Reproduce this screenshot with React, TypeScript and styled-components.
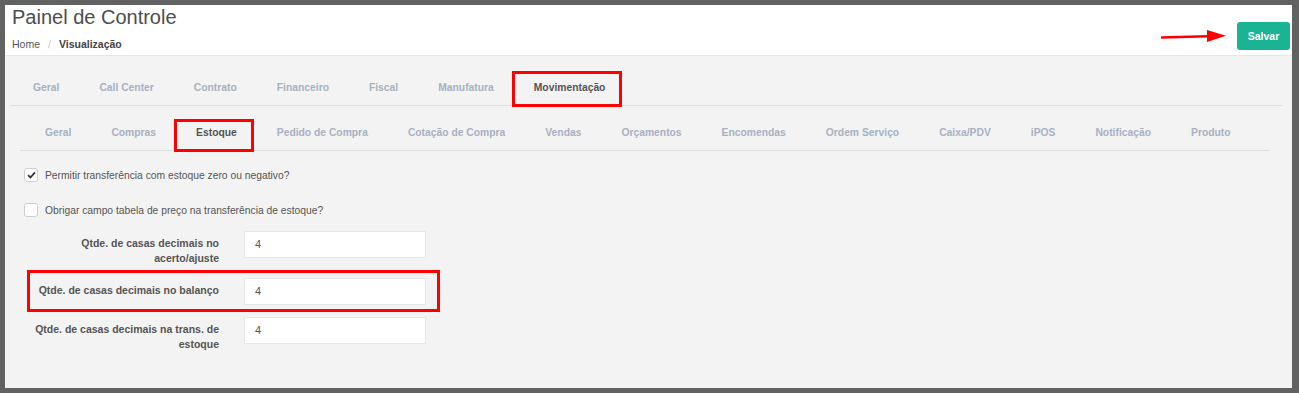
import React from 'react'
import styled, { createGlobalStyle } from 'styled-components'

const Global = createGlobalStyle`
  html, body {
    margin: 0;
    padding: 0;
    background: #626262;
  }
  body {
    font-family: "Liberation Sans", Arial, sans-serif;
  }
`

const Frame = styled.div`
  margin: 5px 7px 0 5px;
  width: 1287px;
  height: 383px;
  background: #f3f3f3;
  display: flex;
  flex-direction: column;
  overflow: hidden;
`

const Header = styled.div`
  height: 50px;
  background: #fff;
  border-bottom: 1px solid #e7e7e7;
  display: flex;
  justify-content: space-between;
  padding: 0 2px 0 7px;
`

const TitleBlock = styled.div`
  display: flex;
  flex-direction: column;
`

const Title = styled.h2`
  margin: 1px 0 0;
  font-size: 20px;
  line-height: 22px;
  font-weight: normal;
  color: #4d4d4d;
`

const Crumbs = styled.div`
  margin-top: 9px;
  font-size: 10.5px;
  line-height: 14px;
  color: #555;
  display: flex;
  gap: 8px;
`

const CrumbSep = styled.span`
  color: #c4c4c4;
`

const CrumbActive = styled.span`
  font-weight: bold;
  color: #444;
`

const Actions = styled.div`
  display: flex;
  align-items: center;
  gap: 10px;
  margin-top: 17px;
  height: 28px;
`

const SaveButton = styled.button`
  width: 53px;
  height: 28px;
  border: none;
  border-radius: 3px;
  background: #1ab394;
  color: #fff;
  font-family: "Liberation Sans", Arial, sans-serif;
  font-size: 10.5px;
  font-weight: bold;
  padding: 0;
`

const Content = styled.div`
  padding: 0 10px 0 5px;
`

const TabBar = styled.ul<{ $top: number; $pad: number }>`
  list-style: none;
  margin: ${p => p.$top}px 0 0;
  padding: 0 0 0 ${p => p.$pad}px;
  display: flex;
  border-bottom: 1px solid #dcdcdc;
`

const Tab = styled.li<{ $active?: boolean; $markTop?: number }>`
  position: relative;
  height: 35px;
  line-height: 36px;
  padding: 0 20px;
  font-size: 10.32px;
  font-weight: bold;
  white-space: nowrap;
  color: ${p => (p.$active ? '#555' : '#a7b1c2')};

  &::after {
    content: '';
    display: ${p => (p.$markTop !== undefined ? 'block' : 'none')};
    position: absolute;
    top: ${p => p.$markTop ?? 0}px;
    bottom: -2px;
    left: -2px;
    right: 3px;
    border: 3px solid #ff0000;
  }
`

const Panel = styled.div`
  padding: 0 13px 0 10px;
`

const CheckRow = styled.label<{ $top: number }>`
  display: flex;
  align-items: center;
  gap: 7px;
  margin: ${p => p.$top}px 0 0 4px;
  height: 14px;
  font-size: 10.3px;
  color: #555;
`

const Box = styled.span`
  width: 12px;
  height: 12px;
  border: 1px solid #cfcfcf;
  border-radius: 3px;
  background: #fff;
  display: flex;
  align-items: center;
  justify-content: center;
`

const Form = styled.div`
  margin: 14px 0 0 9px;
  display: flex;
  flex-direction: column;
  gap: 12px;
`

const Row = styled.div<{ $marked?: boolean }>`
  position: relative;
  display: flex;
  align-items: flex-start;
  width: 397px;

  &::after {
    content: '';
    display: ${p => (p.$marked ? 'block' : 'none')};
    position: absolute;
    top: -8px;
    bottom: -7px;
    left: -2px;
    right: -14px;
    border: 3px solid #ff0000;
  }
`

const Label = styled.div`
  width: 190px;
  padding: 5px 25px 0 0;
  text-align: right;
  font-size: 10.5px;
  line-height: 15px;
  font-weight: bold;
  color: #555;
`

const Field = styled.div`
  width: 170px;
  height: 25px;
  line-height: 25px;
  padding: 0 0 0 10px;
  border: 1px solid #e5e6e7;
  background: #fff;
  font-size: 11px;
  color: #555;
`

const Arrow = () => (
  <svg width="67" height="16" viewBox="0 0 67 16">
    <line x1="1" y1="9.5" x2="48" y2="8.2" stroke="#ff0000" strokeWidth="2.5" />
    <polygon points="47,2 66,7.7 47,14" fill="#ff0000" />
  </svg>
)

const Check = () => (
  <svg width="9" height="8" viewBox="0 0 9 8">
    <path d="M1 4.2 L3.4 6.5 L8 1.3" fill="none" stroke="#333" strokeWidth="1.8" />
  </svg>
)

const mainTabs = ['Geral', 'Call Center', 'Contrato', 'Financeiro', 'Fiscal', 'Manufatura', 'Movimentação']
const subTabs = [
  'Geral', 'Compras', 'Estoque', 'Pedido de Compra', 'Cotação de Compra', 'Vendas', 'Orçamentos',
  'Encomendas', 'Ordem Serviço', 'Caixa/PDV', 'iPOS', 'Notificação', 'Produto',
]

const fields = [
  { label: 'Qtde. de casas decimais no acerto/ajuste', value: '4' },
  { label: 'Qtde. de casas decimais no balanço', value: '4', marked: true },
  { label: 'Qtde. de casas decimais na trans. de estoque', value: '4' },
]

const App = () => {
  return (
    <>
      <Global />
      <Frame>
        <Header>
          <TitleBlock>
            <Title>Painel de Controle</Title>
            <Crumbs>
              <span>Home</span>
              <CrumbSep>/</CrumbSep>
              <CrumbActive>Visualização</CrumbActive>
            </Crumbs>
          </TitleBlock>
          <Actions>
            <Arrow />
            <SaveButton>Salvar</SaveButton>
          </Actions>
        </Header>
        <Content>
          <TabBar $top={14} $pad={3}>
            {mainTabs.map((t, i) => (
              <Tab key={t} $active={i === 6} $markTop={i === 6 ? 1 : undefined}>{t}</Tab>
            ))}
          </TabBar>
          <Panel>
            <TabBar $top={9} $pad={5}>
              {subTabs.map((t, i) => (
                <Tab key={t} $active={i === 2} $markTop={i === 2 ? 4 : undefined}>{t}</Tab>
              ))}
            </TabBar>
            <CheckRow $top={17}>
              <Box><Check /></Box>
              Permitir transferência com estoque zero ou negativo?
            </CheckRow>
            <CheckRow $top={21}>
              <Box />
              Obrigar campo tabela de preço na transferência de estoque?
            </CheckRow>
            <Form>
              {fields.map(f => (
                <Row key={f.label} $marked={f.marked}>
                  <Label>{f.label}</Label>
                  <Field>{f.value}</Field>
                </Row>
              ))}
            </Form>
          </Panel>
        </Content>
      </Frame>
    </>
  )
}

export default App
